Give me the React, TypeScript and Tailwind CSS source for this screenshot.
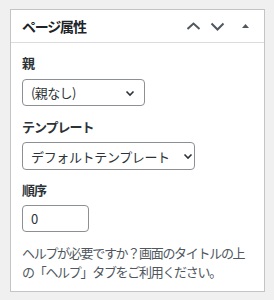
export default function App() {
    const font = { fontFamily: '"Noto Sans CJK JP", "Noto Sans", sans-serif' };
    return (
        <div className="w-[274px] h-[300px] bg-[#f0f0f1] pt-[9px] pl-[10px]" style={font}>
            <div className="w-[255px] h-[283px] bg-white border border-[#c3c4c7]">
                {/* Header */}
                <div className="h-[33px] border-b border-[#dcdcde] flex items-center pl-[11px] pr-[12px]">
                    <h2 className="text-[14px] font-bold text-[#1d2327] leading-none tracking-[-1.2px] flex-1">ページ属性</h2>
                    <svg width="64" height="12" viewBox="0 0 64 12" className="text-[#50575e] mr-[1px]">
                        <path d="M0.5 9 L6.5 3.5 L12.5 9" fill="none" stroke="currentColor" strokeWidth="2" />
                        <path d="M24.5 3.5 L30.5 9.5 L36.5 3.5" fill="none" stroke="currentColor" strokeWidth="2" />
                        <path d="M55 8 L58.5 4 L62 8 Z" fill="currentColor" />
                    </svg>
                </div>

                {/* Body */}
                <div className="px-[11px] pt-[10px] text-[13px] text-[#2c3338]">
                    <p className="font-bold leading-[20px] mb-[6px]">親</p>
                    <div className="w-[123px] h-[27px] border border-[#8c8f94] rounded-[4px] flex items-center justify-between pl-[8px] pr-[9px]">
                        <span className="leading-none tracking-[-0.6px]">(親なし)</span>
                        <Chevron />
                    </div>

                    <p className="font-bold leading-[20px] tracking-[-1px] mt-[11px] mb-[5px]">テンプレート</p>
                    <div className="w-[173px] h-[28px] border border-[#8c8f94] rounded-[4px] flex items-center justify-between pl-[8px] pr-[1px] overflow-hidden">
                        <span className="leading-none tracking-[-0.35px] whitespace-nowrap">デフォルトテンプレート</span>
                        <Chevron />
                    </div>

                    <p className="font-bold leading-[20px] tracking-[-1px] mt-[10px] mb-[5px]">順序</p>
                    <div className="w-[67px] h-[27px] border border-[#8c8f94] rounded-[4px] flex items-center pl-[8px]">
                        <span className="leading-none">0</span>
                    </div>

                    <p className="text-[#50575e] leading-[19px] tracking-[-1.3px] mt-[11px] whitespace-nowrap">
                        ヘルプが必要ですか？画面のタイトルの上
                        <br />
                        の「ヘルプ」タブをご利用ください。
                    </p>
                </div>
            </div>
        </div>
    );
}

function Chevron() {
    return (
        <svg width="10" height="10" viewBox="0 0 10 10" className="text-[#2c3338] shrink-0">
            <path d="M1.5 3.5 L5 7 L8.5 3.5" fill="none" stroke="currentColor" strokeWidth="1.6" />
        </svg>
    );
}
